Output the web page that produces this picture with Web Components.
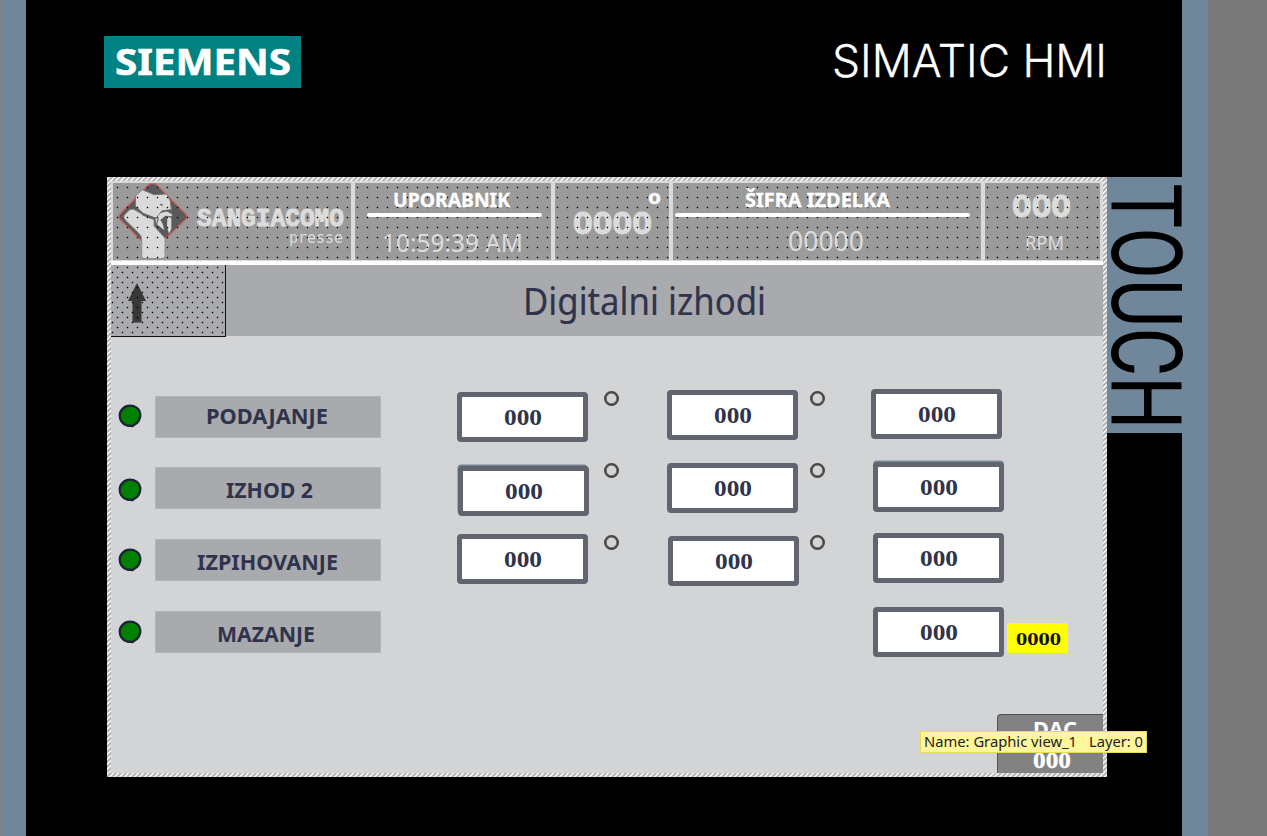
<!DOCTYPE html>
<html lang="sl">
<head>
<meta charset="utf-8">
<title>SIMATIC HMI – Digitalni izhodi</title>
<style>
html,body{margin:0;padding:0;background:#797979;overflow:hidden}
body{width:1267px;height:836px;font-family:"DejaVu Sans","Noto Sans",sans-serif}
</style>
</head>
<body>
<hmi-device>
  <hmi-brand slot="brand"></hmi-brand>
  <hmi-screen slot="screen">
    <hmi-header></hmi-header>
    <hmi-title text="Digitalni izhodi"></hmi-title>
    <hmi-outputs></hmi-outputs>
  </hmi-screen>
</hmi-device>
<script>
const define = (name, html) => customElements.define(name, class extends HTMLElement {
  connectedCallback() {
    if (this.shadowRoot) return;
    const root = this.attachShadow({ mode: 'open' });
    const t = document.createElement('template');
    t.innerHTML = typeof html === 'function' ? html(n => this.getAttribute(n) || '') : html;
    root.append(t.content.cloneNode(true));
  }
});

/* A label whose box is its cap height and its exact width. */
define('fit-text', a => {
  const w = +a('w'), h = +a('h'), size = a('size') || (h / 0.714).toFixed(2);
  return `<style>
    :host{display:block;flex:none;width:${w}px;height:${h}px}
    svg{display:block;overflow:visible}
    text{font-family:"${a('font') || 'Noto Sans'}","DejaVu Sans",sans-serif;
      font-weight:${a('weight') || 400};font-size:${size}px;fill:currentColor;white-space:pre;
      stroke:currentColor;stroke-width:${a('stroke') || 0}px}
  </style><svg width="${w}" height="${h}"><text x="0" y="${h}" textLength="${w}" lengthAdjust="spacingAndGlyphs">${a('text')}</text></svg>`;
});

define('hmi-device', `<style>
  :host{display:grid;grid-template-columns:26px 1156px 26px 59px;width:1267px;height:836px;background:#797979}
  .strip{background:#70879b}
  .left{box-shadow:inset 1px 0 #7d8287}
  .panel{background:#000;display:flex;flex-direction:column;position:relative;z-index:1}
  .brand{height:177px}
  .mid{display:flex;padding-left:81px}
</style>
<div class="strip left"></div>
<div class="panel"><div class="brand"><slot name="brand"></slot></div>
<div class="mid"><slot name="screen"></slot><hmi-touch></hmi-touch></div></div>
<div class="strip"></div><div></div>`);

define('hmi-brand', `<style>
  :host{display:flex;justify-content:space-between;align-items:flex-start;padding:36px 75px 0 78px}
  .logo{width:197px;height:52px;background:#008282;color:#fff;display:flex;align-items:center;justify-content:center}
  .product{color:#fff;padding-top:9px}
</style>
<div class="logo"><fit-text text="SIEMENS" w="176" h="26" size="36.5" weight="700" stroke=".6"></fit-text></div>
<div class="product"><fit-text text="SIMATIC HMI" w="275" h="32" size="44.5" weight="300" font="Inter" stroke=".3"></fit-text></div>`);

define('hmi-touch', `<style>
  :host{display:block;width:75px;height:256px;background:#70879b}
  svg{display:block;overflow:visible}
  text{font-family:Roboto,sans-serif;font-size:98px;font-weight:450;fill:#000}
</style>
<svg width="75" height="256"><text transform="translate(5 6.5) rotate(90)" textLength="246" lengthAdjust="spacingAndGlyphs">TOUCH</text></svg>`);

define('hmi-screen', `<style>
  :host{display:block;box-sizing:border-box;width:1000px;height:600px;padding:4px;
    background:linear-gradient(135deg,#b9b9b9 0 12%,#f4f4f4 13% 37%,#b9b9b9 38% 62%,#f4f4f4 63% 87%,#b9b9b9 88%) 0 0/5px 5px}
  .view{width:992px;height:592px;background:#d3d4d6;display:flex;flex-direction:column}
</style><div class="view"><slot></slot></div>`);

define('hmi-header', `<style>
  :host{display:block;position:relative;width:992px;height:84px;background:#dadada}
  .row{display:grid;grid-template-columns:238px 196px 114px 308px 115px;column-gap:4px;
    height:77px;padding:2px 0 0 2px;color:#dcdcdc}
  .cell{background:#9b9b9b;display:flex;flex-direction:column;align-items:flex-start;box-sizing:border-box;height:77px}
  .line{height:4px;border-radius:2px;background:#fff;flex:none;position:relative;z-index:2}
  .top{color:#fff;position:relative;z-index:2}
  .base{height:4px;background:#fff;margin-top:1px}
  .dots{position:absolute;inset:2px 3px 6px 2px;z-index:1;
    background:radial-gradient(circle at 4.5px 4.5px,#000 .5px,transparent 1.13px) 0 0/10px 10px}
  .brand{display:flex;flex-direction:row}
  .name{padding:26px 0 0 8px;display:flex;flex-direction:column}
</style>
<div class="row">
 <div class="cell brand">
  <svg width="72" height="77" viewBox="66 39 216 231" style="margin-left:4px;flex:none">
   <path d="M162 43Q174 36 186 45L272 132Q279 140 272 148L214 204L137 210L75 148Q68 140 75 132Z" fill="#5a5a5a" stroke="#cb6260" stroke-width="4"/>
   <path d="M140 207V258Q140 266 150 266H200Q210 266 210 257V205L177 168V149L165 145L115 118Q105 116 98 125L88 136Q84 143 91 150L131 189Q140 197 140 207Z" fill="#dadada" stroke="#8d8d8d" stroke-width="3"/>
   <path d="M142 59L121 78L122 110L145 130L183 145L201 122L229 119L226 94L216 72L177 74Z" fill="#dadada" stroke="#777" stroke-width="3"/>
   <path d="M122 113L147 136L182 146M196 103l7 3" fill="none" stroke="#626262" stroke-width="5"/>
   <path d="M182 148L196 130L214 124L230 132L232 139L211 137L196 150L203 162L208 181L182 160ZM217 139L229 144L229 178L222 191L216 171Z" fill="#dadada"/>
   <path d="M179 150Q178 168 193 179M190 146L184 165M211 124Q222 119 234 128" fill="none" stroke="#666" stroke-width="4"/>
  </svg>
  <div class="name">
   <fit-text text="SANGIACOMO" w="147" h="16.5" size="26" weight="700" font="Liberation Mono" stroke="1"></fit-text>
   <fit-text text="presse" w="54" h="8" size="15.5" font="DejaVu Sans Mono" style="margin:9px 0 0 92px"></fit-text>
  </div>
 </div>
 <div class="cell">
  <fit-text class="top" text="UPORABNIK" w="117" h="14" weight="700" stroke=".3" style="margin:10px 0 0 38px"></fit-text>
  <div class="line" style="width:175px;margin:6px 0 0 12px"></div>
  <fit-text text="10:59:39 AM" w="141" h="18" style="margin:17px 0 0 27px"></fit-text>
 </div>
 <div class="cell">
  <fit-text class="top" text="o" w="13" h="11" size="20" weight="700" stroke=".4" style="margin:10px 0 0 93px"></fit-text>
  <fit-text text="0000" w="79" h="22" weight="700" stroke=".8" style="margin:8px 0 0 18px"></fit-text>
 </div>
 <div class="cell">
  <fit-text class="top" text="ŠIFRA IZDELKA" w="145" h="14" weight="700" stroke=".3" style="margin:10px 0 0 72px"></fit-text>
  <div class="line" style="width:295px;margin:6px 0 0 2px"></div>
  <fit-text text="00000" w="76" h="19" style="margin:15px 0 0 115px"></fit-text>
 </div>
 <div class="cell">
  <fit-text text="000" w="59" h="22" weight="700" stroke=".8" style="margin:12px 0 0 27px"></fit-text>
  <fit-text text="RPM" w="39" h="14" style="margin:19px 0 0 40px"></fit-text>
 </div>
</div>
<div class="base"></div>
<div class="dots"></div>`);

define('hmi-title', a => `<style>
  :host{display:flex;width:992px;height:71px;background:#a9aaad}
  .back{box-sizing:border-box;width:115px;height:72px;border-right:1px solid #111;border-bottom:1px solid #111;flex:none;padding:18px 0 0 17px;
    position:relative;background:#a9aaad}
  .back::after{content:"";position:absolute;inset:0;background:
    radial-gradient(circle at 6.5px 2.5px,#000 .5px,transparent 1.13px) 0 0/10px 10px,
    radial-gradient(circle at 1.5px 7.5px,#000 .5px,transparent 1.13px) 0 0/10px 10px}
  svg{display:block}
  .t{padding:22px 0 0 297px;color:#30334c}
</style>
<div class="back"><svg width="18" height="40" viewBox="0 0 18 40"><path d="M9 0L18 18H13.5V39.5H4.5V18H0Z" fill="#393737"/></svg></div>
<div class="t"><fit-text text="${a('text')}" w="243" h="28" size="37.5" stroke=".2"></fit-text></div>`);

define('hmi-led', `<style>:host{display:block;width:24px;height:24px}svg{display:block}</style>
<svg width="24" height="24" viewBox="0 0 24 24"><path d="M12 1.7C17 1.7 21.3 4.500 22 8.500C22.700 12 21.600 16 19 19L14.500 22L9 21.500C4.500 20 1.700 16.500 1.700 11.500C1.700 6 6.500 1.700 12 1.700Z" fill="#008000" stroke="#1b2238" stroke-width="2.300"/></svg>`);

define('hmi-label', a => `<style>
  :host{display:flex;justify-content:center;box-sizing:border-box;width:226px;height:42px;padding-top:${a('pad')}px;
    background:#a9aaad;box-shadow:inset 0 0 0 1px #b3b4b7;color:#30334c}
</style><fit-text text="${a('text')}" w="${a('w')}" h="15" weight="700" size="20.800" style="margin-right:${a('shift') || 0}px"></fit-text>`);

define('hmi-field', a => `<style>
  :host{display:flex;justify-content:center;align-items:center;box-sizing:border-box;width:131px;height:50px;
    border:5px solid #62646f;border-radius:4px;background:#fff;color:#30334c}
</style><fit-text text="000" w="38" h="15.500" size="23" weight="700" font="Liberation Serif"></fit-text>`);

define('hmi-degree', `<style>:host{display:block;box-sizing:border-box;width:15px;height:15px;border:2px solid #454545;border-radius:50%;box-shadow:inset 0 0 0 .6px #454545}</style>`);

define('hmi-tooltip', `<style>
  :host{display:flex;box-sizing:border-box;width:227px;height:22px;background:#fff69b;border:1px solid #e6dc5a;padding:3.500px 0 0 3px;color:#222}
</style><fit-text text="Name: Graphic view_1" w="153" h="11" size="14.500"></fit-text>
<fit-text text="Layer: 0" w="54" h="11" size="14.500" style="margin-left:12px"></fit-text>`);

/* Rows of outputs; --y and --x nudge each control inside its grid cell. */
define('hmi-outputs', `<style>
  :host{display:block;position:relative;height:437px;padding-top:51px;box-sizing:border-box}
  .row{display:grid;grid-template-columns:44px 302px 147px 63px 144px 60px 136px 70px;height:72px;align-items:start}
  .row>*{margin-top:var(--y,0px);margin-left:var(--x,0px)}
  .echo{box-shadow:-1px -2px 0 -.5px #70858f}
  .echo3{box-shadow:0 -1.500px 0 #778d98}
  .value{width:61px;height:30px;background:#ff0;border-radius:3px;display:flex;align-items:center;justify-content:center;color:#111}
  .dac{position:absolute;right:0;bottom:0;box-sizing:border-box;width:106px;height:59px;background:#828282;border-top:1.500px solid #50505a;
    border-left:1.500px solid #50505a;border-top-left-radius:4px;color:#fff;padding:7px 0 0 35px;display:flex;flex-direction:column;gap:16px}
  hmi-tooltip{position:absolute;left:809px;top:395px;z-index:3}
</style>
<div class="row">
 <hmi-led style="--x:7px;--y:17px"></hmi-led><hmi-label style="--y:9px" text="PODAJANJE" w="122" pad="13" shift="3"></hmi-label>
 <hmi-field style="--y:5px"></hmi-field><hmi-degree style="--y:4px"></hmi-degree>
 <hmi-field style="--y:3px"></hmi-field><hmi-degree style="--y:4px;--x:-1px"></hmi-degree>
 <hmi-field style="--y:2px"></hmi-field>
</div>
<div class="row">
 <hmi-led style="--x:7px;--y:19px"></hmi-led><hmi-label style="--y:8px" text="IZHOD 2" w="87" pad="16" shift="-3"></hmi-label>
 <hmi-field class="echo" style="--x:1px;--y:7px"></hmi-field><hmi-degree style="--y:4px"></hmi-degree>
 <hmi-field style="--y:4px"></hmi-field><hmi-degree style="--y:4px;--x:-1px"></hmi-degree>
 <hmi-field class="echo3" style="--x:2px;--y:3px"></hmi-field>
</div>
<div class="row">
 <hmi-led style="--x:7px;--y:17px"></hmi-led><hmi-label style="--y:8px" text="IZPIHOVANJE" w="141" pad="16" shift="1"></hmi-label>
 <hmi-field style="--y:3px"></hmi-field><hmi-degree style="--y:4px"></hmi-degree>
 <hmi-field style="--x:1px;--y:5px"></hmi-field><hmi-degree style="--y:4px;--x:-1px"></hmi-degree>
 <hmi-field style="--x:2px;--y:2px"></hmi-field>
</div>
<div class="row">
 <hmi-led style="--x:7px;--y:17px"></hmi-led><hmi-label style="--y:8px" text="MAZANJE" w="98" pad="16" shift="4"></hmi-label>
 <span></span><span></span><span></span><span></span>
 <hmi-field style="--x:2px;--y:4px"></hmi-field>
 <div class="value" style="--y:20px"><fit-text text="0000" w="45" h="13" size="17.500" weight="700" font="DejaVu Serif" style="padding:1px 0 0 1px"></fit-text></div>
</div>
<div class="dac"><fit-text text="DAC" w="44" h="15" weight="700"></fit-text><fit-text text="000" w="38" h="15" size="22.500" weight="700" font="Liberation Serif" stroke=".3"></fit-text></div>
<hmi-tooltip></hmi-tooltip>`);
</script>
</body>
</html>
